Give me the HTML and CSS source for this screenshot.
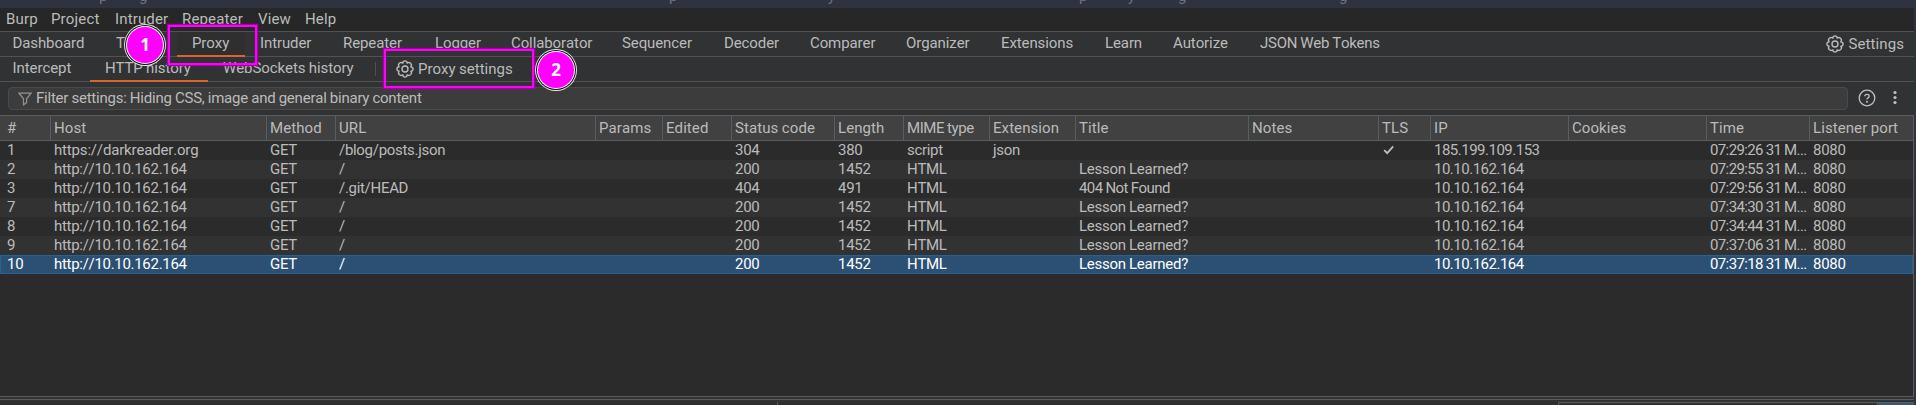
FILE: index.html
```html
<!DOCTYPE html>
<html lang="en">
<head>
<meta charset="utf-8">
<title>Burp Suite - HTTP history</title>
<link rel="stylesheet" href="styles.css">
</head>
<body>
<svg class="defs" width="0" height="0"><defs>
<symbol id="gear" viewBox="0 0 18 18"><path d="M7.3 1.5Q9 .3 10.7 1.5L11.2 3 12.9 2.4Q15 2.8 15.5 5L14.9 6.8 16.5 7.5Q17.6 9 16.5 10.6L14.9 11.3 15.6 12.9Q15 15.1 13 15.6L11.2 14.9 10.6 16.5Q9 17.6 7.4 16.5L6.8 14.9 5 15.6Q2.8 15.1 2.4 13L3 11.2 1.5 10.6Q.4 9 1.5 7.4L3 6.8 2.4 5Q2.9 2.8 5 2.4L6.8 3Z"/><circle cx="9" cy="9" r="3"/></symbol>
</defs></svg>
<div class="window">
  <div class="titlebar"><span>p</span><span>g</span><span>p</span><span>y</span><span>p</span><span>y</span><span>g</span><span>g</span></div>
  <nav class="menu"><span>Burp</span><span>Project</span><span>Intruder</span><span>Repeater</span><span>View</span><span>Help</span></nav>
  <nav class="tabs"><span>Dashboard</span><span>Target</span><span class="active">Proxy</span><span>Intruder</span><span>Repeater</span><span>Logger</span><span>Collaborator</span><span>Sequencer</span><span>Decoder</span><span>Comparer</span><span>Organizer</span><span>Extensions</span><span>Learn</span><span>Autorize</span><span class="jwt">JSON Web Tokens</span><span class="settings"><svg class="gear"><use href="#gear"/></svg>Settings</span></nav>
  <nav class="subtabs"><span>Intercept</span><span class="active">HTTP history</span><span>WebSockets history</span><i class="divider"></i><span class="proxy-settings"><svg class="gear"><use href="#gear"/></svg>Proxy settings</span></nav>
  <div class="filter-row">
    <div class="filter"><svg class="funnel" viewBox="0 0 14 14"><path d="M1 1.2H13L8.6 6.8V10.6L5.5 12.8V6.8Z"/></svg><span>Filter settings: Hiding CSS, image and general binary content</span></div>
    <svg class="help" viewBox="0 0 18 18"><circle cx="9" cy="9" r="7.8"/><path d="M6.8 7.3Q6.8 5.3 9 5.3T11.2 7.2Q11.2 8.2 10 8.8T9 10.4"/><circle class="dot" cx="9" cy="12.8" r="1"/></svg>
    <svg class="more" viewBox="0 0 4 16"><circle cx="2" cy="2.5" r="1.6"/><circle cx="2" cy="7.5" r="1.6"/><circle cx="2" cy="12.5" r="1.6"/></svg>
  </div>
  <div class="table">
    <div class="row head"><span>#</span><span>Host</span><span>Method</span><span>URL</span><span>Params</span><span>Edited</span><span>Status code</span><span>Length</span><span class="mime">MIME type</span><span>Extension</span><span>Title</span><span>Notes</span><span>TLS</span><span>IP</span><span>Cookies</span><span>Time</span><span>Listener port</span></div>
    <div class="row"><span>1</span><span class="named">https://darkreader.org</span><span>GET</span><span>/blog/posts.json</span><span></span><span></span><span>304</span><span>380</span><span>script</span><span>json</span><span></span><span></span><span><svg class="check" viewBox="0 0 12 10"><path d="M1.2 5.2L4.2 8.2L10.2 1.4"/></svg></span><span>185.199.109.153</span><span></span><span>07:29:26 31 M...</span><span>8080</span></div>
    <div class="row"><span>2</span><span>http://10.10.162.164</span><span>GET</span><span>/</span><span></span><span></span><span>200</span><span>1452</span><span>HTML</span><span></span><span>Lesson Learned?</span><span></span><span></span><span>10.10.162.164</span><span></span><span>07:29:55 31 M...</span><span>8080</span></div>
    <div class="row"><span>3</span><span>http://10.10.162.164</span><span>GET</span><span>/.git/HEAD</span><span></span><span></span><span>404</span><span>491</span><span>HTML</span><span></span><span class="tight">404 Not Found</span><span></span><span></span><span>10.10.162.164</span><span></span><span>07:29:56 31 M...</span><span>8080</span></div>
    <div class="row"><span>7</span><span>http://10.10.162.164</span><span>GET</span><span>/</span><span></span><span></span><span>200</span><span>1452</span><span>HTML</span><span></span><span>Lesson Learned?</span><span></span><span></span><span>10.10.162.164</span><span></span><span>07:34:30 31 M...</span><span>8080</span></div>
    <div class="row"><span>8</span><span>http://10.10.162.164</span><span>GET</span><span>/</span><span></span><span></span><span>200</span><span>1452</span><span>HTML</span><span></span><span>Lesson Learned?</span><span></span><span></span><span>10.10.162.164</span><span></span><span>07:34:44 31 M...</span><span>8080</span></div>
    <div class="row"><span>9</span><span>http://10.10.162.164</span><span>GET</span><span>/</span><span></span><span></span><span>200</span><span>1452</span><span>HTML</span><span></span><span>Lesson Learned?</span><span></span><span></span><span>10.10.162.164</span><span></span><span>07:37:06 31 M...</span><span>8080</span></div>
    <div class="row selected"><span>10</span><span>http://10.10.162.164</span><span>GET</span><span>/</span><span></span><span></span><span>200</span><span>1452</span><span>HTML</span><span></span><span>Lesson Learned?</span><span></span><span></span><span>10.10.162.164</span><span></span><span>07:37:18 31 M...</span><span>8080</span></div>
  </div>
  <div class="splitter"></div>
  <div class="lower"><div class="request"></div><div class="response"></div><div class="inspector"><i></i></div></div>
</div>
<div class="mark mark-proxy"></div><div class="badge badge-one">1</div>
<div class="mark mark-settings"></div><div class="badge badge-two">2</div>
</body>
</html>
```
FILE: styles.css
```css
* { box-sizing: border-box; }
body { margin: 0; width: 1916px; height: 405px; overflow: hidden; background: #2f3340; color: #bbbbbb; font: 15px/19px Roboto, "Liberation Sans", sans-serif; letter-spacing: -0.08px; word-spacing: -0.3px; font-kerning: none; white-space: nowrap; }
.defs { position: absolute; }
.window { width: 1914px; height: 405px; display: flex; flex-direction: column; background: #313234; }
.titlebar { height: 8px; flex: none; background: #2f3340; color: #6f7482; overflow: hidden; display: grid; grid-template-columns: 40px 530px 159px 251px 49px 50px 161px 1fr; padding-left: 99px; line-height: 16px; }
.titlebar span { margin-top: -12px; }
.menu { height: 24px; flex: none; background: #272727; border-bottom: 1px solid #505152; display: grid; grid-template-columns: 45px 64px 67px 76px 47px 60px; padding: 1px 0 0 6px; letter-spacing: 0.15px; }
.menu span { line-height: 20px; }
.tabs, .subtabs { height: 25px; flex: none; border-bottom: 1px solid #505254; display: grid; line-height: 22px; }
.tabs { grid-template-columns: 101px 76px 68px 82px 92px 76px 111px 102px 86px 96px 95px 104px 68px 87px 150px 1fr; letter-spacing: -0.1px; }
.tabs span, .subtabs span { padding-left: 12.5px; height: 25px; }
.tabs span:nth-child(2), .tabs .active { padding-left: 15px; }
.tabs span:nth-child(n+4) { padding-left: 15px; }
.tabs span:nth-child(n+5) { padding-left: 16px; }
.tabs span.jwt { letter-spacing: -0.27px; }
.active { border-bottom: 2px solid #d9652b; }
.tabs .active { background: #2f2f30; }
.tabs .settings { display: flex; justify-content: flex-end; padding-right: 10px; line-height: 24px; letter-spacing: 0.1px; }
.gear { width: 18px; height: 18px; margin: 3px 4px 0 0; fill: none; stroke: #bbbbbb; stroke-width: 1.4; flex: none; }
.subtabs { grid-template-columns: 90px 118px 167px 1px 200px; line-height: 23px; }
.subtabs .active { padding-left: 15px; }
.subtabs span:nth-child(3) { padding-left: 15px; }
.divider { width: 1px; height: 14px; margin-top: 5px; background: #505254; }
.subtabs .proxy-settings { display: flex; padding-left: 20px; line-height: 25px; letter-spacing: 0; }
.filter-row { height: 33px; flex: none; display: flex; padding: 5px 0 0 8px; }
.filter { width: 1840px; height: 23px; border: 1px solid #4a4a4b; border-radius: 4px; background: #3c3c3c; display: flex; padding-left: 9px; line-height: 21px; letter-spacing: -0.22px; }
.funnel { width: 14px; height: 14px; margin: 4px 4px 0 0; fill: none; stroke: #929292; stroke-width: 1.2; }
.help { width: 18px; height: 18px; margin: 2px 0 0 10px; fill: none; stroke: #c0c0c0; stroke-width: 1.3; }
.help .dot, .more { fill: #c0c0c0; stroke: none; }
.more { width: 4px; height: 16px; margin: 3px 0 0 17px; }
.table { height: 282px; flex: none; border-top: 1px solid #5a5c5e; border-right: 1px solid #5a5c5e; border-bottom: 1px solid #5a5c5e; background: #2b2b2b; }
.row { height: 19px; display: grid; grid-template-columns: 51px 216px 69px 260px 67px 69px 103px 69px 86px 86px 173px 130px 52px 138px 138px 103px 1fr; line-height: 19px; letter-spacing: -0.3px; }
.row span { padding-left: 3px; overflow: hidden; }
.row span:first-child { padding-left: 7px; }
.row:nth-child(odd) { background: #323232; }
.row .named { letter-spacing: -0.17px; }
.row span:nth-child(11) { letter-spacing: -0.25px; }
.row span.tight { letter-spacing: -0.56px; }
.row span:nth-child(14) { letter-spacing: -0.5px; }
.row span:nth-child(16) { letter-spacing: -0.62px; }
.row.head { height: 25px; background: #414142; border-bottom: 1px solid #5a5c5e; line-height: 25px; }
.row.head span { border-right: 1px solid #5a5c5e; letter-spacing: 0.08px; }
.row.head .mime { letter-spacing: -0.43px; }
.row.head span:last-child { border: 0; }
.row.selected { background: #2c5074; box-shadow: inset 0 0 0 1px #2a6193; color: #fff; }
.check { display: block; width: 12px; height: 10px; margin: 4px 0 0 1px; fill: none; stroke: #c0c0c0; stroke-width: 1.8; }
.splitter { height: 3px; flex: none; border-bottom: 1px solid #5a5c5e; }
.lower { flex: 1; display: grid; grid-template-columns: 778px 781px 1fr; padding-top: 2px; background: #313234; }
.request, .response { background: #2d2d2d; border-right: 1px solid #5a5c5e; }
.inspector { background: #302e31; border-top: 1px solid #5a5c5e; display: flex; justify-content: flex-end; }
.inspector i { width: 37px; background: #355675; border-left: 1px solid #5a5c5e; }
.mark { position: absolute; border: 2px solid #ff00ff; box-shadow: 0 0 1px 1px #a800a8, inset 0 0 1px #a800a8; }
.mark-proxy { left: 168px; top: 25px; width: 89px; height: 40px; }
.mark-settings { left: 384px; top: 49px; width: 150px; height: 39px; }
.badge { position: absolute; width: 36px; height: 36px; border-radius: 50%; background: #ff00ff; box-shadow: 0 0 0 1px #fff, 0 0 0 2px #111, 0 0 0 3px #e8e8e8; color: #fff; font: bold 17px/36px "Noto Sans", sans-serif; text-align: center; }
.badge-one { left: 127px; top: 27px; }
.badge-two { left: 538px; top: 52px; }
```
